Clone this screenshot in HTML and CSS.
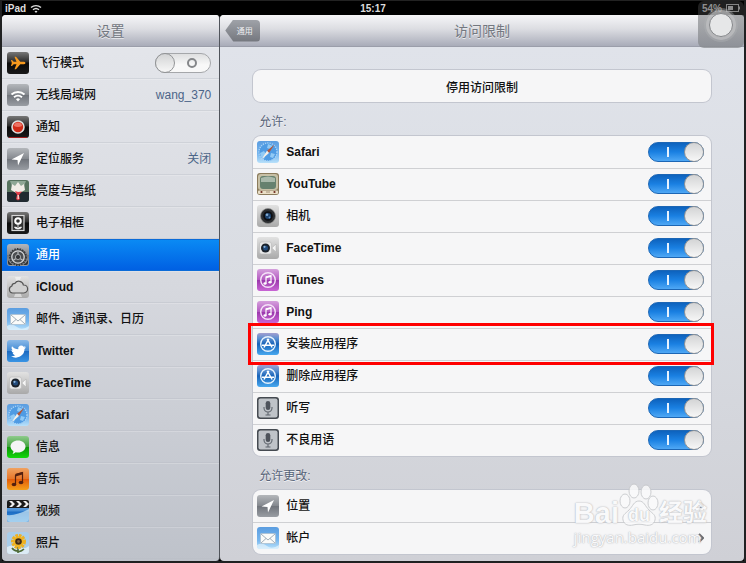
FILE: index.html
```html
<!DOCTYPE html>
<html lang="zh-CN">
<head>
  <meta charset="UTF-8">
  <meta name="viewport" content="width=device-width, initial-scale=1.0">
  <title>设置</title>
  <link rel="stylesheet" href="styles.css">
</head>
<body>
  <!-- Shared icons -->
  <svg class="sprite" aria-hidden="true">
    <defs>
      <linearGradient id="gBlack" x2="0" y2="1"><stop offset="0" stop-color="#777"/><stop offset=".45" stop-color="#2b2b2b"/><stop offset=".5" stop-color="#0a0a0a"/><stop offset="1" stop-color="#191919"/></linearGradient>
      <linearGradient id="gGray" x2="0" y2="1"><stop offset="0" stop-color="#b4b7bb"/><stop offset=".48" stop-color="#85898f"/><stop offset=".52" stop-color="#71757c"/><stop offset="1" stop-color="#999da3"/></linearGradient>
      <linearGradient id="gSilver" x2="0" y2="1"><stop offset="0" stop-color="#e2e2e2"/><stop offset="1" stop-color="#a9a9a9"/></linearGradient>
      <linearGradient id="gBlue" x2="0" y2="1"><stop offset="0" stop-color="#8ab9e8"/><stop offset=".48" stop-color="#448cd5"/><stop offset=".52" stop-color="#1c6bc2"/><stop offset="1" stop-color="#3994e4"/></linearGradient>
      <linearGradient id="gSky" x2="0" y2="1"><stop offset="0" stop-color="#5b9de0"/><stop offset=".6" stop-color="#77b6ee"/><stop offset="1" stop-color="#b9e1fa"/></linearGradient>
      <linearGradient id="gPurple" x2="0" y2="1"><stop offset="0" stop-color="#d5a0dc"/><stop offset=".48" stop-color="#b45cc2"/><stop offset=".52" stop-color="#9c39ad"/><stop offset="1" stop-color="#c865d4"/></linearGradient>
      <linearGradient id="gStore" x2="0" y2="1"><stop offset="0" stop-color="#a39fd0"/><stop offset=".25" stop-color="#5a8fd0"/><stop offset=".5" stop-color="#1763b9"/><stop offset="1" stop-color="#48a8ef"/></linearGradient>
      <linearGradient id="gGreen" x2="0" y2="1"><stop offset="0" stop-color="#8fcb8c"/><stop offset=".48" stop-color="#42a33f"/><stop offset=".52" stop-color="#0d9408"/><stop offset="1" stop-color="#12d90b"/></linearGradient>
      <linearGradient id="gOrange" x2="0" y2="1"><stop offset="0" stop-color="#f0a261"/><stop offset=".48" stop-color="#e8772a"/><stop offset=".52" stop-color="#e35d0b"/><stop offset="1" stop-color="#f6a01a"/></linearGradient>
    </defs>

    <symbol id="plane" viewBox="0 0 22 22">
      <rect width="22" height="22" rx="3" fill="url(#gBlack)"/>
      <path d="M18.500 11c0-.9-1.200-1.300-2.500-1.300h-2.700L9 4.800H7.500l2 4.900H6.700L5 8H4l.8 3L4 14h1l1.700-1.700h2.800l-2 4.900H9l4.300-4.900H16c1.300 0 2.500-.4 2.500-1.300z" fill="#f79a1e"/>
    </symbol>
    <symbol id="wifi" viewBox="0 0 22 22">
      <rect width="22" height="22" rx="3" fill="url(#gGray)"/>
      <path d="M4.500 10.500a9.500 9.500 0 0 1 13 0M7 13.200a6 6 0 0 1 8 0" fill="none" stroke="#fff" stroke-width="2"/>
      <path d="M11 17.500l-2-2.300a3 3 0 0 1 4 0z" fill="#fff"/>
    </symbol>
    <symbol id="notice" viewBox="0 0 22 22">
      <rect width="22" height="22" rx="3" fill="url(#gBlack)"/>
      <circle cx="11" cy="11" r="6" fill="#d12a17" stroke="#dedede" stroke-width="1.600"/>
      <path d="M7 10a4 3.500 0 0 1 8 0q-4 2-8 0z" fill="#ee7263"/>
      <path d="M2 21.500h18" stroke="#a12020"/>
    </symbol>
    <symbol id="location" viewBox="0 0 22 22">
      <rect width="22" height="22" rx="3" fill="url(#gGray)"/>
      <path d="M17 5L4.500 11.500l6 .5.500 5.500z" fill="#fff"/>
    </symbol>
    <symbol id="wallpaper" viewBox="0 0 22 22">
      <rect width="22" height="22" rx="3" fill="#57735f"/>
      <path d="M0 12h22v7a3 3 0 0 1-3 3H3a3 3 0 0 1-3-3z" fill="#202a30"/>
      <path d="M3 1h16l-2 5H5z" fill="#8fa795"/>
      <path d="M11 14L4 10l1-6 3 2 3-4 3 4 3-2 1 6z" fill="#f1ece6"/>
      <path d="M11 12l-3-1 2 4-1 4 2 1.500 2-1.500-1-4 3-3.500z" fill="#e2404a"/>
      <path d="M10.500 15h1.500v4h-1.500z" fill="#f8c9c4"/>
    </symbol>
    <symbol id="frame" viewBox="0 0 22 22">
      <rect width="22" height="22" rx="3" fill="url(#gBlack)"/>
      <rect x="5" y="3.500" width="12" height="15" fill="#333" stroke="#d8d8d8" stroke-width="1.200"/>
      <circle cx="11" cy="9" r="2.800" fill="none" stroke="#fff" stroke-width="2"/>
      <path d="M11 12v5M11 17q-3 0-3.500-2 3 0 3.500 2 .5-2 3.500-2-.5 2-3.500 2" fill="#fff" stroke="#fff" stroke-width=".8"/>
    </symbol>
    <symbol id="gear" viewBox="0 0 22 22">
      <rect width="22" height="22" rx="3" fill="url(#gGray)"/>
      <circle cx="11" cy="13" r="8" fill="#4c4f52" stroke="#383a3d" stroke-width="2" stroke-dasharray="1.500 1.100"/>
      <circle cx="11" cy="13" r="6.200" fill="none" stroke="#d2d4d6" stroke-width="1.300"/>
      <path d="M11 13V7.500M11 13l-5 3.500M11 13l5 3.500" stroke="#b9bcc0" stroke-width="1.200"/>
      <circle cx="11" cy="13" r="2.600" fill="#34363a" stroke="#a4a7aa"/>
      <path d="M1 16q2 4 5 5H3q-2 0-2-2zM21 16q-2 4-5 5h3q2 0 2-2z" fill="#2e3033"/>
    </symbol>
    <symbol id="cloud" viewBox="0 0 22 22">
      <rect width="22" height="22" rx="3" fill="url(#gSilver)"/>
      <path d="M11 11L8 1h6zM11 11L7 21h8z" fill="#fff" opacity=".5"/>
      <path d="M5.500 17a3.600 3.600 0 0 1-.6-7 3 3 0 0 1 3-2.700 4.700 4.700 0 0 1 8.500 1.700 4 4 0 0 1 .4 8z" fill="#d0d0d0" stroke="#555" stroke-width="1.200"/>
    </symbol>
    <symbol id="mail" viewBox="0 0 22 22">
      <rect width="22" height="22" rx="3" fill="url(#gSky)"/>
      <path d="M0 18q5-3 10 1t12-1v1a3 3 0 0 1-3 3H3a3 3 0 0 1-3-3z" fill="#eef8fe" opacity=".6"/>
      <rect x="3.500" y="6.500" width="15" height="10" rx=".8" fill="#fbfbf9" stroke="#a9bccb" stroke-width=".7"/>
      <path d="M4 7l7 6 7-6M4 16l5-4.500M18 16l-5-4.500" fill="none" stroke="#8999a8" stroke-width=".8"/>
    </symbol>
    <symbol id="twitter" viewBox="0 0 22 22">
      <rect width="22" height="22" rx="3" fill="url(#gBlue)"/>
      <path d="M19 7.200c-.6.300-1.200.4-1.800.5.600-.4 1.100-1 1.300-1.700-.6.400-1.200.6-1.900.7a3 3 0 0 0-5.300 2.600C8.800 9.200 6.600 8 5 6.200c-.8 1.500-.4 3.100.8 4.100-.5 0-.9-.1-1.300-.4 0 1.500 1 2.700 2.400 3-.4.100-.9.100-1.300 0 .4 1.200 1.500 2 2.800 2.100A6 6 0 0 1 4 16.300c4 2.400 8.700 1.500 11.500-1.700 1.400-1.600 2-3.600 2-5.700.6-.5 1.100-1 1.500-1.700z" fill="#fff"/>
    </symbol>
    <symbol id="facetime" viewBox="0 0 22 22">
      <rect width="22" height="22" rx="3" fill="url(#gSilver)"/>
      <rect x="2.500" y="5" width="12" height="12" rx="2" fill="#e8e8e8" stroke="#b9b9b9" stroke-width=".6"/>
      <path d="M14.800 11L19 7v8z" fill="#f5f5f5" stroke="#aaa" stroke-width=".5"/>
      <circle cx="8.500" cy="11" r="4.500" fill="#1b222b"/>
      <circle cx="8.500" cy="11" r="2.500" fill="#214a7b"/>
      <circle cx="7.500" cy="9.800" r="1.100" fill="#8cb5dc"/>
    </symbol>
    <symbol id="safari" viewBox="0 0 22 22">
      <rect width="22" height="22" rx="3" fill="url(#gSky)"/>
      <circle cx="11" cy="11" r="9" fill="#4f9be3" stroke="#a9d3f6" stroke-width="1.400" stroke-dasharray="1.200 1.100"/>
      <path d="M3 12l4-2 2 3-2 5-3-2zM11 3l5 2-3 3-3-1zM14 12l4 1-2 4-3-1z" fill="#91caf5"/>
      <path d="M17.500 3.500L10 9.800 12 12z" fill="#b3573b"/>
      <path d="M4.500 18.500L10 9.800 12 12z" fill="#f5efe8"/>
    </symbol>
    <symbol id="message" viewBox="0 0 22 22">
      <rect width="22" height="22" rx="3" fill="url(#gGreen)"/>
      <path d="M11 4.500c4.200 0 7.500 2.600 7.500 6s-3.300 6-7.500 6c-.8 0-1.600-.1-2.300-.3-.9.900-2 1.500-3.200 1.500.7-.7 1-1.600.9-2.600-1.800-1.100-2.900-2.700-2.900-4.600 0-3.400 3.300-6 7.500-6z" fill="#f4f4f6"/>
    </symbol>
    <symbol id="music" viewBox="0 0 22 22">
      <rect width="22" height="22" rx="3" fill="url(#gOrange)"/>
      <path d="M8.500 6.500l7-2v10" fill="none" stroke="#55200f" stroke-width="1.200"/>
      <path d="M8.500 6l7-2v2.500l-7 2z" fill="#55200f"/>
      <path d="M8.500 7v9" stroke="#55200f" stroke-width="1.200"/>
      <ellipse cx="7" cy="16.500" rx="2.300" ry="1.700" fill="#55200f"/>
      <ellipse cx="14" cy="14.500" rx="2.300" ry="1.700" fill="#55200f"/>
    </symbol>
    <symbol id="video" viewBox="0 0 22 22">
      <rect y="1" width="22" height="21" rx="2" fill="url(#gBlue)"/>
      <path d="M0 15q9 1 22-6v10a3 3 0 0 1-3 3H3a3 3 0 0 1-3-3z" fill="#c7e3f3" opacity=".75"/>
      <path d="M0 2q0-2 2-2h18q2 0 2 2v6H0z" fill="#1a1a1a"/>
      <path d="M2 1h3l3 3-3 3H2l3-3zM9 1h3l3 3-3 3H9l3-3zM16 1h3l3 3-3 3h-3l3-3z" fill="#eee"/>
    </symbol>
    <symbol id="photo" viewBox="0 0 22 22">
      <rect width="22" height="22" rx="3" fill="#a9cdea"/>
      <path d="M0 15q5-3 11 0t11-1v5a3 3 0 0 1-3 3H3a3 3 0 0 1-3-3z" fill="#dcebf5"/>
      <path d="M11 14v7M11 19q-4 0-6-3M11 20q4-1 6-3" fill="none" stroke="#4d6a36" stroke-width="1.600"/>
      <circle cx="11.500" cy="9.500" r="5.500" fill="#f5c32b" stroke="#eeb122" stroke-width="4" stroke-dasharray="2.400 .8"/>
      <circle cx="11.500" cy="9.500" r="3.300" fill="#3f2b17"/>
      <circle cx="11.500" cy="9.500" r="1.400" fill="#85653a"/>
    </symbol>
    <symbol id="youtube" viewBox="0 0 22 22">
      <rect width="22" height="22" rx="3" fill="#8b7b5c"/>
      <rect x="1" y="1" width="20" height="16" rx="3" fill="#c7c0a6"/>
      <rect x="3" y="3" width="16" height="13" rx="3" fill="#66816f"/>
      <path d="M4 5q7-3 14 0v4H4z" fill="#a9b9ab"/>
      <rect x="1" y="17.500" width="20" height="3.500" rx="1" fill="#eadfc7"/>
      <circle cx="4.500" cy="19" r="1.100" fill="#6c2b20"/><circle cx="17.500" cy="19" r="1.100" fill="#6c2b20"/>
      <path d="M9 19h4" stroke="#a3927a"/>
    </symbol>
    <symbol id="camera" viewBox="0 0 22 22">
      <rect width="22" height="22" rx="3" fill="url(#gSilver)"/>
      <circle cx="11" cy="11" r="7.500" fill="#2c2e31" stroke="#8b8b8b" stroke-width=".7"/>
      <circle cx="11" cy="11" r="4.800" fill="#0d0f14"/>
      <circle cx="11" cy="11" r="3" fill="#1e4470"/>
      <circle cx="10" cy="9.800" r="1.300" fill="#83abd3"/><circle cx="12.500" cy="12.500" r=".9" fill="#5e8fc4"/>
    </symbol>
    <symbol id="itunes" viewBox="0 0 22 22">
      <rect width="22" height="22" rx="3" fill="url(#gPurple)"/>
      <circle cx="11" cy="11" r="7.300" fill="none" stroke="#f5e3f8" stroke-width="1.400"/>
      <path d="M9 14.500V8l5-1.300v6.500" fill="none" stroke="#fff" stroke-width="1.200"/>
      <path d="M9 7.500l5-1.300V8L9 9.300z" fill="#fff"/>
      <ellipse cx="8" cy="14.500" rx="1.600" ry="1.300" fill="#fff"/><ellipse cx="13" cy="13.300" rx="1.600" ry="1.300" fill="#fff"/>
    </symbol>
    <symbol id="appstore" viewBox="0 0 22 22">
      <rect width="22" height="22" rx="3" fill="url(#gStore)"/>
      <circle cx="11" cy="11" r="7.300" fill="none" stroke="#e6f2fd" stroke-width="1.400"/>
      <path d="M11.800 5.800L7 14.500M10.200 5.800l4.900 8.700M5 12.300h12" stroke="#fff" stroke-width="1.500"/>
    </symbol>
    <symbol id="mic" viewBox="0 0 22 22">
      <rect width="22" height="22" rx="3" fill="#454a51"/>
      <rect x="1.500" y="1.500" width="19" height="19" rx="2" fill="#bfc3c8"/>
      <rect x="8.700" y="4" width="4.600" height="9" rx="2.300" fill="#4e535b"/>
      <path d="M7 10v1a4 4 0 0 0 8 0v-1M11 15v3M8.500 18h5" fill="none" stroke="#5f656d" stroke-width="1.100"/>
    </symbol>
  </svg>

  <div class="tablet">
    <div class="status-bar">
      <span class="carrier">iPad
        <svg class="signal" viewBox="0 0 12 9" aria-hidden="true">
          <path d="M1 3.500a7.500 7.500 0 0 1 10 0M3 5.800a4.500 4.500 0 0 1 6 0" fill="none" stroke="#ddd" stroke-width="1.400"/>
          <path d="M6 9L4.500 7.300a2.300 2.300 0 0 1 3 0z" fill="#ddd"/>
        </svg>
      </span>
      <span class="clock">15:17</span>
      <span class="power">54%
        <svg class="battery" viewBox="0 0 15 8" aria-hidden="true">
          <rect x=".5" y=".5" width="12" height="7" fill="none" stroke="#ccc"/>
          <rect x="2" y="2" width="5" height="4" fill="#ddd"/>
          <path d="M13.500 2.500v3" stroke="#ccc"/>
        </svg>
      </span>
    </div>

    <div class="panes">
      <nav class="sidebar">
        <header class="bar"><h1>设置</h1></header>
        <ul class="menu">
          <li class="row">
            <svg class="icon"><use href="#plane"/></svg>
            <label class="name" for="airplane">飞行模式</label>
            <input type="checkbox" class="switch" id="airplane">
          </li>
          <li><a class="row" href="#"><svg class="icon"><use href="#wifi"/></svg><span class="name">无线局域网</span><span class="value">wang_370</span></a></li>
          <li><a class="row" href="#"><svg class="icon"><use href="#notice"/></svg><span class="name">通知</span></a></li>
          <li><a class="row" href="#"><svg class="icon"><use href="#location"/></svg><span class="name">定位服务</span><span class="value">关闭</span></a></li>
          <li><a class="row" href="#"><svg class="icon"><use href="#wallpaper"/></svg><span class="name">亮度与墙纸</span></a></li>
          <li><a class="row" href="#"><svg class="icon"><use href="#frame"/></svg><span class="name">电子相框</span></a></li>
          <li><a class="row active" href="#"><svg class="icon"><use href="#gear"/></svg><span class="name">通用</span></a></li>
          <li><a class="row" href="#"><svg class="icon"><use href="#cloud"/></svg><span class="name latin">iCloud</span></a></li>
          <li><a class="row" href="#"><svg class="icon"><use href="#mail"/></svg><span class="name">邮件、通讯录、日历</span></a></li>
          <li><a class="row" href="#"><svg class="icon"><use href="#twitter"/></svg><span class="name latin">Twitter</span></a></li>
          <li><a class="row" href="#"><svg class="icon"><use href="#facetime"/></svg><span class="name latin">FaceTime</span></a></li>
          <li><a class="row" href="#"><svg class="icon"><use href="#safari"/></svg><span class="name latin">Safari</span></a></li>
          <li><a class="row" href="#"><svg class="icon"><use href="#message"/></svg><span class="name">信息</span></a></li>
          <li><a class="row" href="#"><svg class="icon"><use href="#music"/></svg><span class="name">音乐</span></a></li>
          <li><a class="row" href="#"><svg class="icon"><use href="#video"/></svg><span class="name">视频</span></a></li>
          <li><a class="row" href="#"><svg class="icon"><use href="#photo"/></svg><span class="name">照片</span></a></li>
        </ul>
      </nav>

      <main class="detail">
        <header class="bar">
          <button type="button" class="back">通用</button>
          <h1>访问限制</h1>
        </header>
        <div class="content">
          <button type="button" class="disable">停用访问限制</button>

          <h2>允许:</h2>
          <ul class="group">
            <li class="row"><svg class="icon"><use href="#safari"/></svg><label class="name latin" for="safariSwitch">Safari</label><input type="checkbox" class="switch" id="safariSwitch" checked></li>
            <li class="row"><svg class="icon"><use href="#youtube"/></svg><label class="name latin" for="youtubeSwitch">YouTube</label><input type="checkbox" class="switch" id="youtubeSwitch" checked></li>
            <li class="row"><svg class="icon"><use href="#camera"/></svg><label class="name" for="cameraSwitch">相机</label><input type="checkbox" class="switch" id="cameraSwitch" checked></li>
            <li class="row"><svg class="icon"><use href="#facetime"/></svg><label class="name latin" for="facetimeSwitch">FaceTime</label><input type="checkbox" class="switch" id="facetimeSwitch" checked></li>
            <li class="row"><svg class="icon"><use href="#itunes"/></svg><label class="name latin" for="itunesSwitch">iTunes</label><input type="checkbox" class="switch" id="itunesSwitch" checked></li>
            <li class="row"><svg class="icon"><use href="#itunes"/></svg><label class="name latin" for="pingSwitch">Ping</label><input type="checkbox" class="switch" id="pingSwitch" checked></li>
            <li class="row marked"><svg class="icon"><use href="#appstore"/></svg><label class="name" for="installSwitch">安装应用程序</label><input type="checkbox" class="switch" id="installSwitch" checked></li>
            <li class="row"><svg class="icon"><use href="#appstore"/></svg><label class="name" for="deleteSwitch">删除应用程序</label><input type="checkbox" class="switch" id="deleteSwitch" checked></li>
            <li class="row"><svg class="icon"><use href="#mic"/></svg><label class="name" for="dictationSwitch">听写</label><input type="checkbox" class="switch" id="dictationSwitch" checked></li>
            <li class="row"><svg class="icon"><use href="#mic"/></svg><label class="name" for="languageSwitch">不良用语</label><input type="checkbox" class="switch" id="languageSwitch" checked></li>
          </ul>

          <h2>允许更改:</h2>
          <ul class="group">
            <li><a class="row" href="#"><svg class="icon"><use href="#location"/></svg><span class="name">位置</span><svg class="chevron" viewBox="0 0 6 10"><path d="M1 1l4 4-4 4"/></svg></a></li>
            <li><a class="row" href="#"><svg class="icon"><use href="#mail"/></svg><span class="name">帐户</span><svg class="chevron" viewBox="0 0 6 10"><path d="M1 1l4 4-4 4"/></svg></a></li>
          </ul>
        </div>
      </main>
    </div>

    <button type="button" class="assistive" aria-label="AssistiveTouch"><span class="dot"></span></button>

    <div class="watermark">
      <div class="brand">
        <span class="brand-latin">Bai</span>
        <span class="paw">
          <svg viewBox="0 0 40 44" aria-hidden="true">
            <ellipse cx="6" cy="18" rx="5" ry="7"/>
            <ellipse cx="15" cy="8" rx="5" ry="7"/>
            <ellipse cx="27" cy="9" rx="5" ry="7"/>
            <ellipse cx="34" cy="20" rx="5" ry="7"/>
            <path d="M20 18c-5 0-6 5-10 9s-7 5-6 10 6 6 10 5 8-1 12 0 9 0 10-5-2-6-6-10-5-9-10-9z"/>
          </svg>
          <span class="du">du</span>
        </span>
        <span class="brand-cn">经验</span>
      </div>
      <div class="site">jingyan.baidu.com</div>
    </div>
  </div>
</body>
</html>
```

FILE: styles.css
```css
*,
*::before,
*::after {
  box-sizing: border-box;
}

body {
  margin: 0;
  background: #202122;
  font-family: "Liberation Sans", "Noto Sans CJK SC", sans-serif;
  font-size: 12px;
  color: #111;
}

ul {
  list-style: none;
  margin: 0;
  padding: 0;
}

a {
  color: inherit;
  text-decoration: none;
}

button {
  font-family: inherit;
  cursor: pointer;
}

.sprite {
  position: absolute;
  width: 0;
  height: 0;
}

.tablet {
  position: relative;
  display: flex;
  flex-direction: column;
  min-height: 100vh;
  padding: 0 2px 2px;
}

/* Status bar */
.status-bar {
  display: grid;
  grid-template-columns: 1fr auto 1fr;
  align-items: center;
  height: 15px;
  padding: 0 3px;
  background: #000;
  border-top: 1px solid #222;
  color: #ddd;
  font-size: 10px;
  font-weight: bold;
}

.carrier,
.power {
  display: flex;
  align-items: center;
  gap: 4px;
}

.power {
  justify-content: flex-end;
}

.signal {
  width: 12px;
  height: 9px;
}

.battery {
  width: 15px;
  height: 8px;
}

/* Two panes */
.panes {
  flex: 1;
  display: grid;
  grid-template-columns: 5fr 12fr;
  background: #000;
}

.sidebar {
  border-right: 1px solid #50545b;
  border-radius: 4px;
  overflow: hidden;
  background: linear-gradient(#e5e7ec, #d6d8de 50%, #bec2ca);
}

.detail {
  border-radius: 4px;
  overflow: hidden;
  background: linear-gradient(#e1e4eb, #d9dce2 50%, #cfd0d6);
}

.bar {
  position: relative;
  display: flex;
  align-items: center;
  justify-content: center;
  height: 32px;
  border-bottom: 1px solid #9b9eaa;
  background: linear-gradient(#f6f6f8, #dcdde2 45%, #a9acb9);
}

.bar h1 {
  margin: 0;
  font-size: 14px;
  font-weight: normal;
  line-height: 18px;
  color: #73777f;
  text-shadow: 0 1px 0 #e8e9ed;
}

.back {
  position: absolute;
  left: 5px;
  width: 35px;
  height: 22px;
  padding: 0 0 0 4px;
  border: none;
  border-radius: 4px;
  clip-path: polygon(0 50%, 8px 0, 100% 0, 100% 100%, 8px 100%);
  background: linear-gradient(#9fa2a8, #74777e);
  color: #f0f0f2;
  font-size: 8px;
}

/* Rows */
.row {
  display: flex;
  align-items: center;
  gap: 7px;
  height: 32px;
  padding: 0 8px 0 5px;
}

.icon {
  flex: none;
  width: 22px;
  height: 22px;
}

.name {
  flex: 1;
  font-weight: 500;
  line-height: 16px;
}

.latin {
  font-weight: bold;
}

.value {
  color: #4c6588;
  line-height: 16px;
}

.menu .row {
  border-top: 1px solid #ffffff33;
  border-bottom: 1px solid #b9bdc666;
}

.menu .row.active {
  border-color: #0b6bd8;
  background: linear-gradient(#0a8af4, #0060e3);
  color: #fff;
}

/* Switches */
.switch {
  appearance: none;
  position: relative;
  flex: none;
  width: 56px;
  height: 20px;
  margin: 0;
  border: 1px solid #a5a7aa;
  border-radius: 10px;
  background: linear-gradient(#dedfe0, #f8f8f8 60%);
  cursor: pointer;
}

.switch::before {
  content: "";
  position: absolute;
  top: 4px;
  left: 31px;
  width: 10px;
  height: 10px;
  border: 2px solid #85878a;
  border-radius: 50%;
}

.switch::after {
  content: "";
  position: absolute;
  top: -1px;
  left: -1px;
  width: 20px;
  height: 20px;
  border: 1px solid #929496;
  border-radius: 50%;
  background: linear-gradient(#d3d4d5, #f7f7f7);
}

.switch:checked {
  border-color: #1c66b5;
  background: linear-gradient(#0d62bd, #1a80e2 50%, #4fa8f5);
}

.switch:checked::before {
  left: 18px;
  width: 2px;
  border: none;
  border-radius: 0;
  background: #e6f2ff;
}

.switch:checked::after {
  left: auto;
  right: -1px;
}

/* Detail pane */
.content {
  padding: 23px 33px 7px;
}

.disable {
  display: block;
  width: 100%;
  height: 32px;
  border: none;
  border-radius: 8px;
  background: #f6f6f7;
  box-shadow: 0 0 0 1px #c3c6cf;
  color: #111;
  font-size: 12px;
  font-weight: 500;
}

.content h2 {
  margin: 0;
  padding: 6px 6px 0;
  font-size: 12px;
  font-weight: normal;
  line-height: 28px;
  color: #586478;
  text-shadow: 0 1px 0 #f2f3f6;
}

.group {
  border-radius: 8px;
  background: #f6f6f7;
  box-shadow: 0 0 0 1px #c3c6cf;
}

.group .row {
  padding: 0 7px 0 4px;
}

.group li + li {
  box-shadow: inset 0 1px 0 #cfd0d3;
}

.group .marked {
  position: relative;
}

.marked::after {
  content: "";
  position: absolute;
  inset: -5px -3px -5px -5px;
  border: 3px solid #f00;
  pointer-events: none;
}

.chevron {
  width: 6px;
  height: 10px;
  fill: none;
  stroke: #6b6c70;
  stroke-width: 2;
}

/* Floating button over the corner */
.assistive {
  position: absolute;
  top: 1px;
  right: 2px;
  display: flex;
  justify-content: center;
  width: 46px;
  height: 47px;
  padding: 12px 0 0;
  border: none;
  border-radius: 6px;
  background: linear-gradient(#40404080 14px, #7a7c7f99 14px, #85888cb3);
}

.dot {
  width: 24px;
  height: 24px;
  border: 1px solid #85878a;
  border-radius: 50%;
  background: #e6e7e8;
  box-shadow: 0 0 0 3px #c4c5c799, 0 0 0 5px #b0b1b366;
}

/* Watermark */
.watermark {
  position: absolute;
  right: 39px;
  bottom: 16px;
  color: #fafafb;
  text-shadow: 0 0 1px #a9abb0, 0 0 2px #b9bbc0;
  opacity: .85;
  pointer-events: none;
}

.brand {
  display: flex;
  align-items: flex-end;
}

.brand-latin {
  font-size: 29px;
  font-weight: bold;
  line-height: 28px;
}

.brand-cn {
  font-size: 24px;
  font-weight: bold;
  line-height: 28px;
}

.paw {
  display: grid;
  width: 40px;
  height: 44px;
}

.paw svg,
.du {
  grid-area: 1 / 1;
}

.paw svg {
  fill: #fafafb;
  stroke: #c6c8cb;
}

.du {
  align-self: end;
  text-align: center;
  font-size: 18px;
  font-weight: bold;
  line-height: 24px;
}

.site {
  font-family: "Open Sans", sans-serif;
  font-size: 15px;
  line-height: 20px;
}
```
